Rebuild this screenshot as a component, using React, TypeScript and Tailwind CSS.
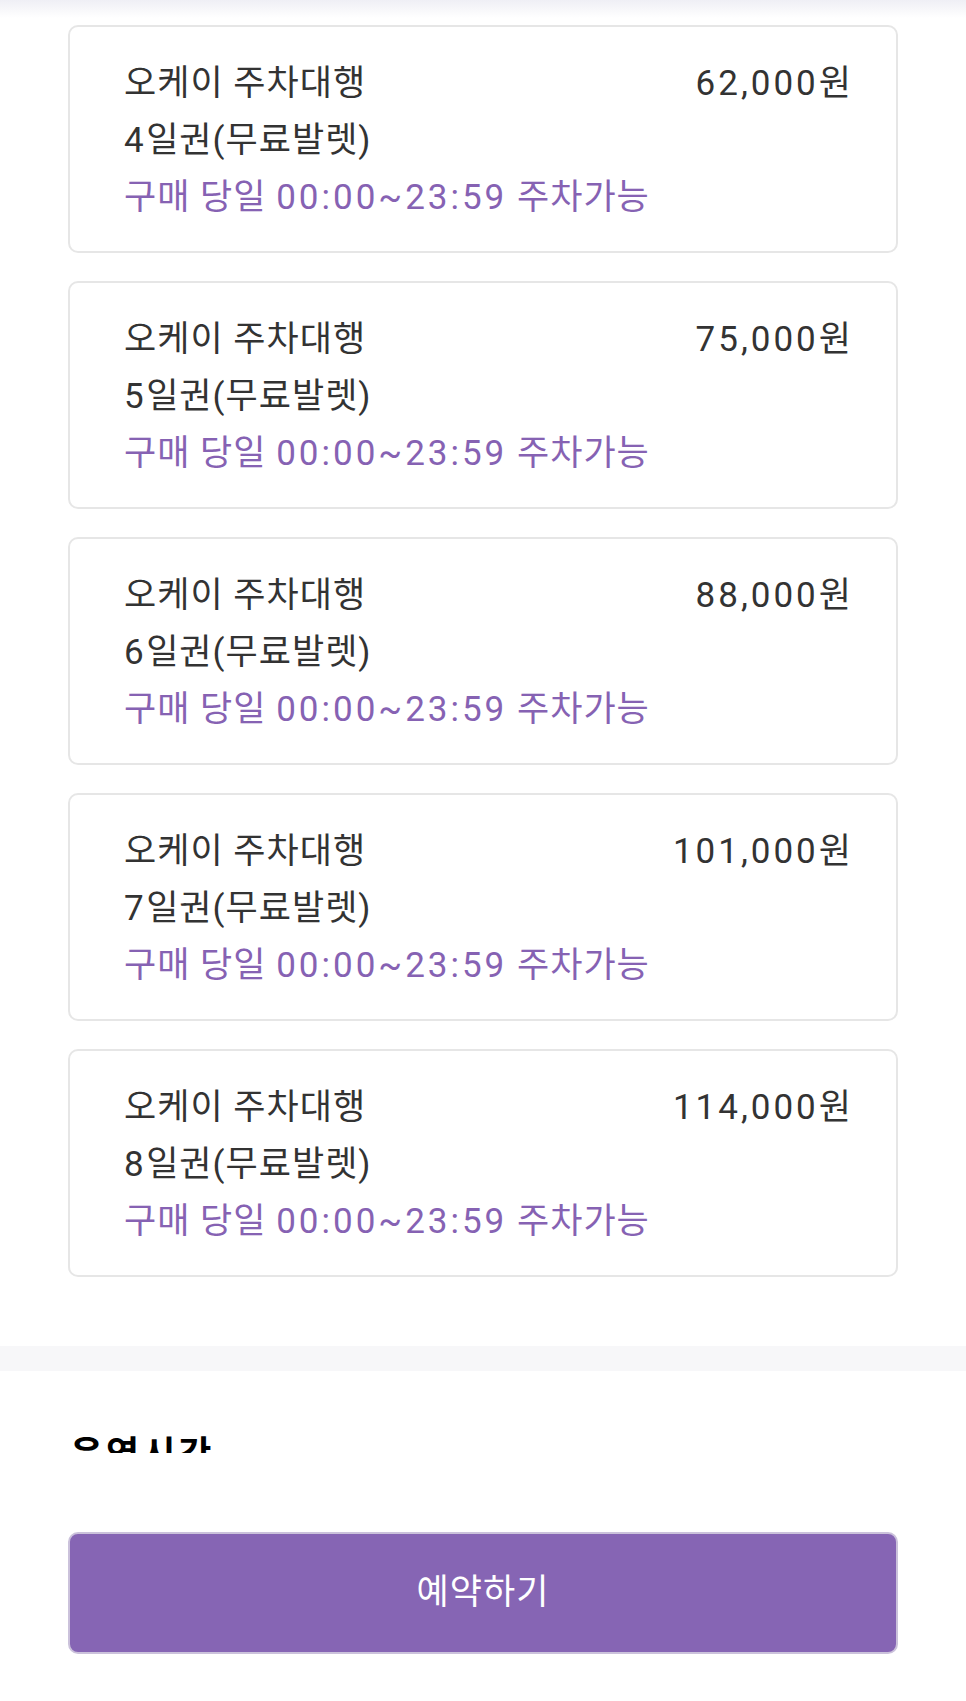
import React from "react";

const items = [
  { day: "4", price: "62,000" },
  { day: "5", price: "75,000" },
  { day: "6", price: "88,000" },
  { day: "7", price: "101,000" },
  { day: "8", price: "114,000" },
];

export default function App() {
  return (
    <div
      className="w-[966px] h-[1701px] bg-white overflow-hidden flex flex-col"
      style={{ fontFamily: 'Roboto, "Noto Sans CJK KR", sans-serif' }}
    >
      <div className="h-[18px] bg-gradient-to-b from-[#efeff5] to-white shrink-0" />
      <div className="px-[68px] pt-[7px] flex flex-col gap-[28px]">
        {items.map((it) => (
          <div
            key={it.day}
            className="h-[228px] border-2 border-[#e6e6e6] rounded-[10px] pl-[54px] pr-[44px] pt-[28px] text-[35px] tracking-[1px] text-[#333333] leading-[57px]"
          >
            <div className="flex justify-between items-start">
              <div>
                <div>오케이 주차대행</div>
                <div>
                  <span className="tracking-[2.5px]">{it.day}</span>일권(무료발렛)
                </div>
              </div>
              <div>
                <span className="tracking-[3px]">{it.price}</span>원
              </div>
            </div>
            <div className="text-[#8662b3]">
              구매 당일 <span className="tracking-[3px]">00:00~23:59</span> 주차가능
            </div>
          </div>
        ))}
      </div>
      <div className="h-[69px] shrink-0" />
      <div className="h-[25px] bg-[#f7f7f9] shrink-0" />
      <div className="h-[82px] overflow-hidden px-[70px] pt-[66px] shrink-0">
        <div className="text-[36px] tracking-[3px] font-bold leading-none text-black">운영시간</div>
      </div>
      <div className="flex-1 bg-white px-[68px] pt-[79px]">
        <button className="w-full h-[122px] rounded-[10px] bg-[#8665b4] border-2 border-[#cbc2db] text-white text-[35px] tracking-[1px]">
          예약하기
        </button>
      </div>
    </div>
  );
}
